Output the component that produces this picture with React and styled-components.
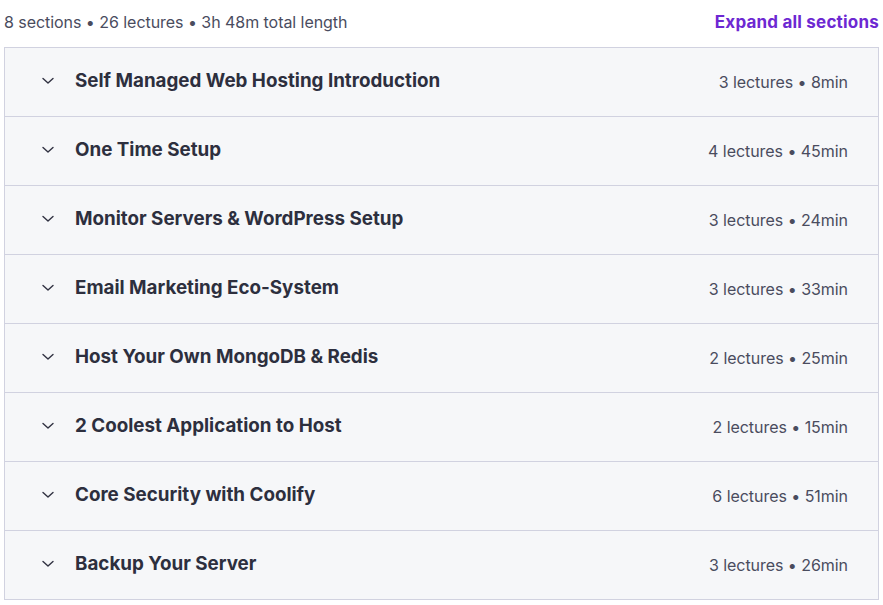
import React from "react";
import styled, { createGlobalStyle } from "styled-components";

const Global = createGlobalStyle`
  html, body { margin: 0; padding: 0; background: #ffffff; }
  body { font-family: Inter, "Noto Sans", sans-serif; -webkit-font-smoothing: antialiased; }
`;

const Page = styled.div`
  width: 883px;
  padding: 0 4px 0 4px;
  box-sizing: border-box;
`;

const Header = styled.div`
  height: 47px;
  display: flex;
  align-items: center;
  justify-content: space-between;
  padding-bottom: 3px;
  box-sizing: border-box;
`;

const Summary = styled.span`
  font-size: 16px;
  color: #4a4c5e;
  letter-spacing: -0.05px;
`;

const ExpandLink = styled.button`
  border: 0;
  background: none;
  padding: 0;
  font-family: inherit;
  font-size: 17px;
  font-weight: 700;
  color: #6d28d2;
  cursor: pointer;
  letter-spacing: 0.2px;
`;

const Accordion = styled.div`
  border: 1px solid #d1d2e0;
  border-bottom: 0;
  width: 875px;
  box-sizing: border-box;
`;

const Row = styled.div`
  height: 69px;
  box-sizing: border-box;
  border-bottom: 1px solid #d1d2e0;
  background: #f6f7f9;
  display: flex;
  align-items: center;
  padding: 0 30px 0 37px;
`;

const Chevron = styled.svg`
  width: 12px;
  height: 8px;
  flex: none;
  margin-right: 21px;
  margin-top: -2px;
`;

const Title = styled.span`
  flex: 1;
  font-size: 18.8px;
  font-weight: 700;
  color: #2d2f3e;
  padding-bottom: 4px;
`;

const Meta = styled.span`
  font-size: 16px;
  color: #4a4c5e;
  letter-spacing: -0.05px;
`;

const sections = [
  ["Self Managed Web Hosting Introduction", "3 lectures • 8min"],
  ["One Time Setup", "4 lectures • 45min"],
  ["Monitor Servers & WordPress Setup", "3 lectures • 24min"],
  ["Email Marketing Eco-System", "3 lectures • 33min"],
  ["Host Your Own MongoDB & Redis", "2 lectures • 25min"],
  ["2 Coolest Application to Host", "2 lectures • 15min"],
  ["Core Security with Coolify", "6 lectures • 51min"],
  ["Backup Your Server", "3 lectures • 26min"],
];

export default function App() {
  return (
    <Page>
      <Global />
      <Header>
        <Summary>8 sections • 26 lectures • 3h 48m total length</Summary>
        <ExpandLink>Expand all sections</ExpandLink>
      </Header>
      <Accordion>
        {sections.map(([t, m]) => (
          <Row key={t}>
            <Chevron viewBox="0 0 12 8">
              <path d="M1 1.5 L6 6 L11 1.5" fill="none" stroke="#303141" strokeWidth="1.4" strokeLinecap="round" strokeLinejoin="round" />
            </Chevron>
            <Title>{t}</Title>
            <Meta>{m}</Meta>
          </Row>
        ))}
      </Accordion>
    </Page>
  );
}
